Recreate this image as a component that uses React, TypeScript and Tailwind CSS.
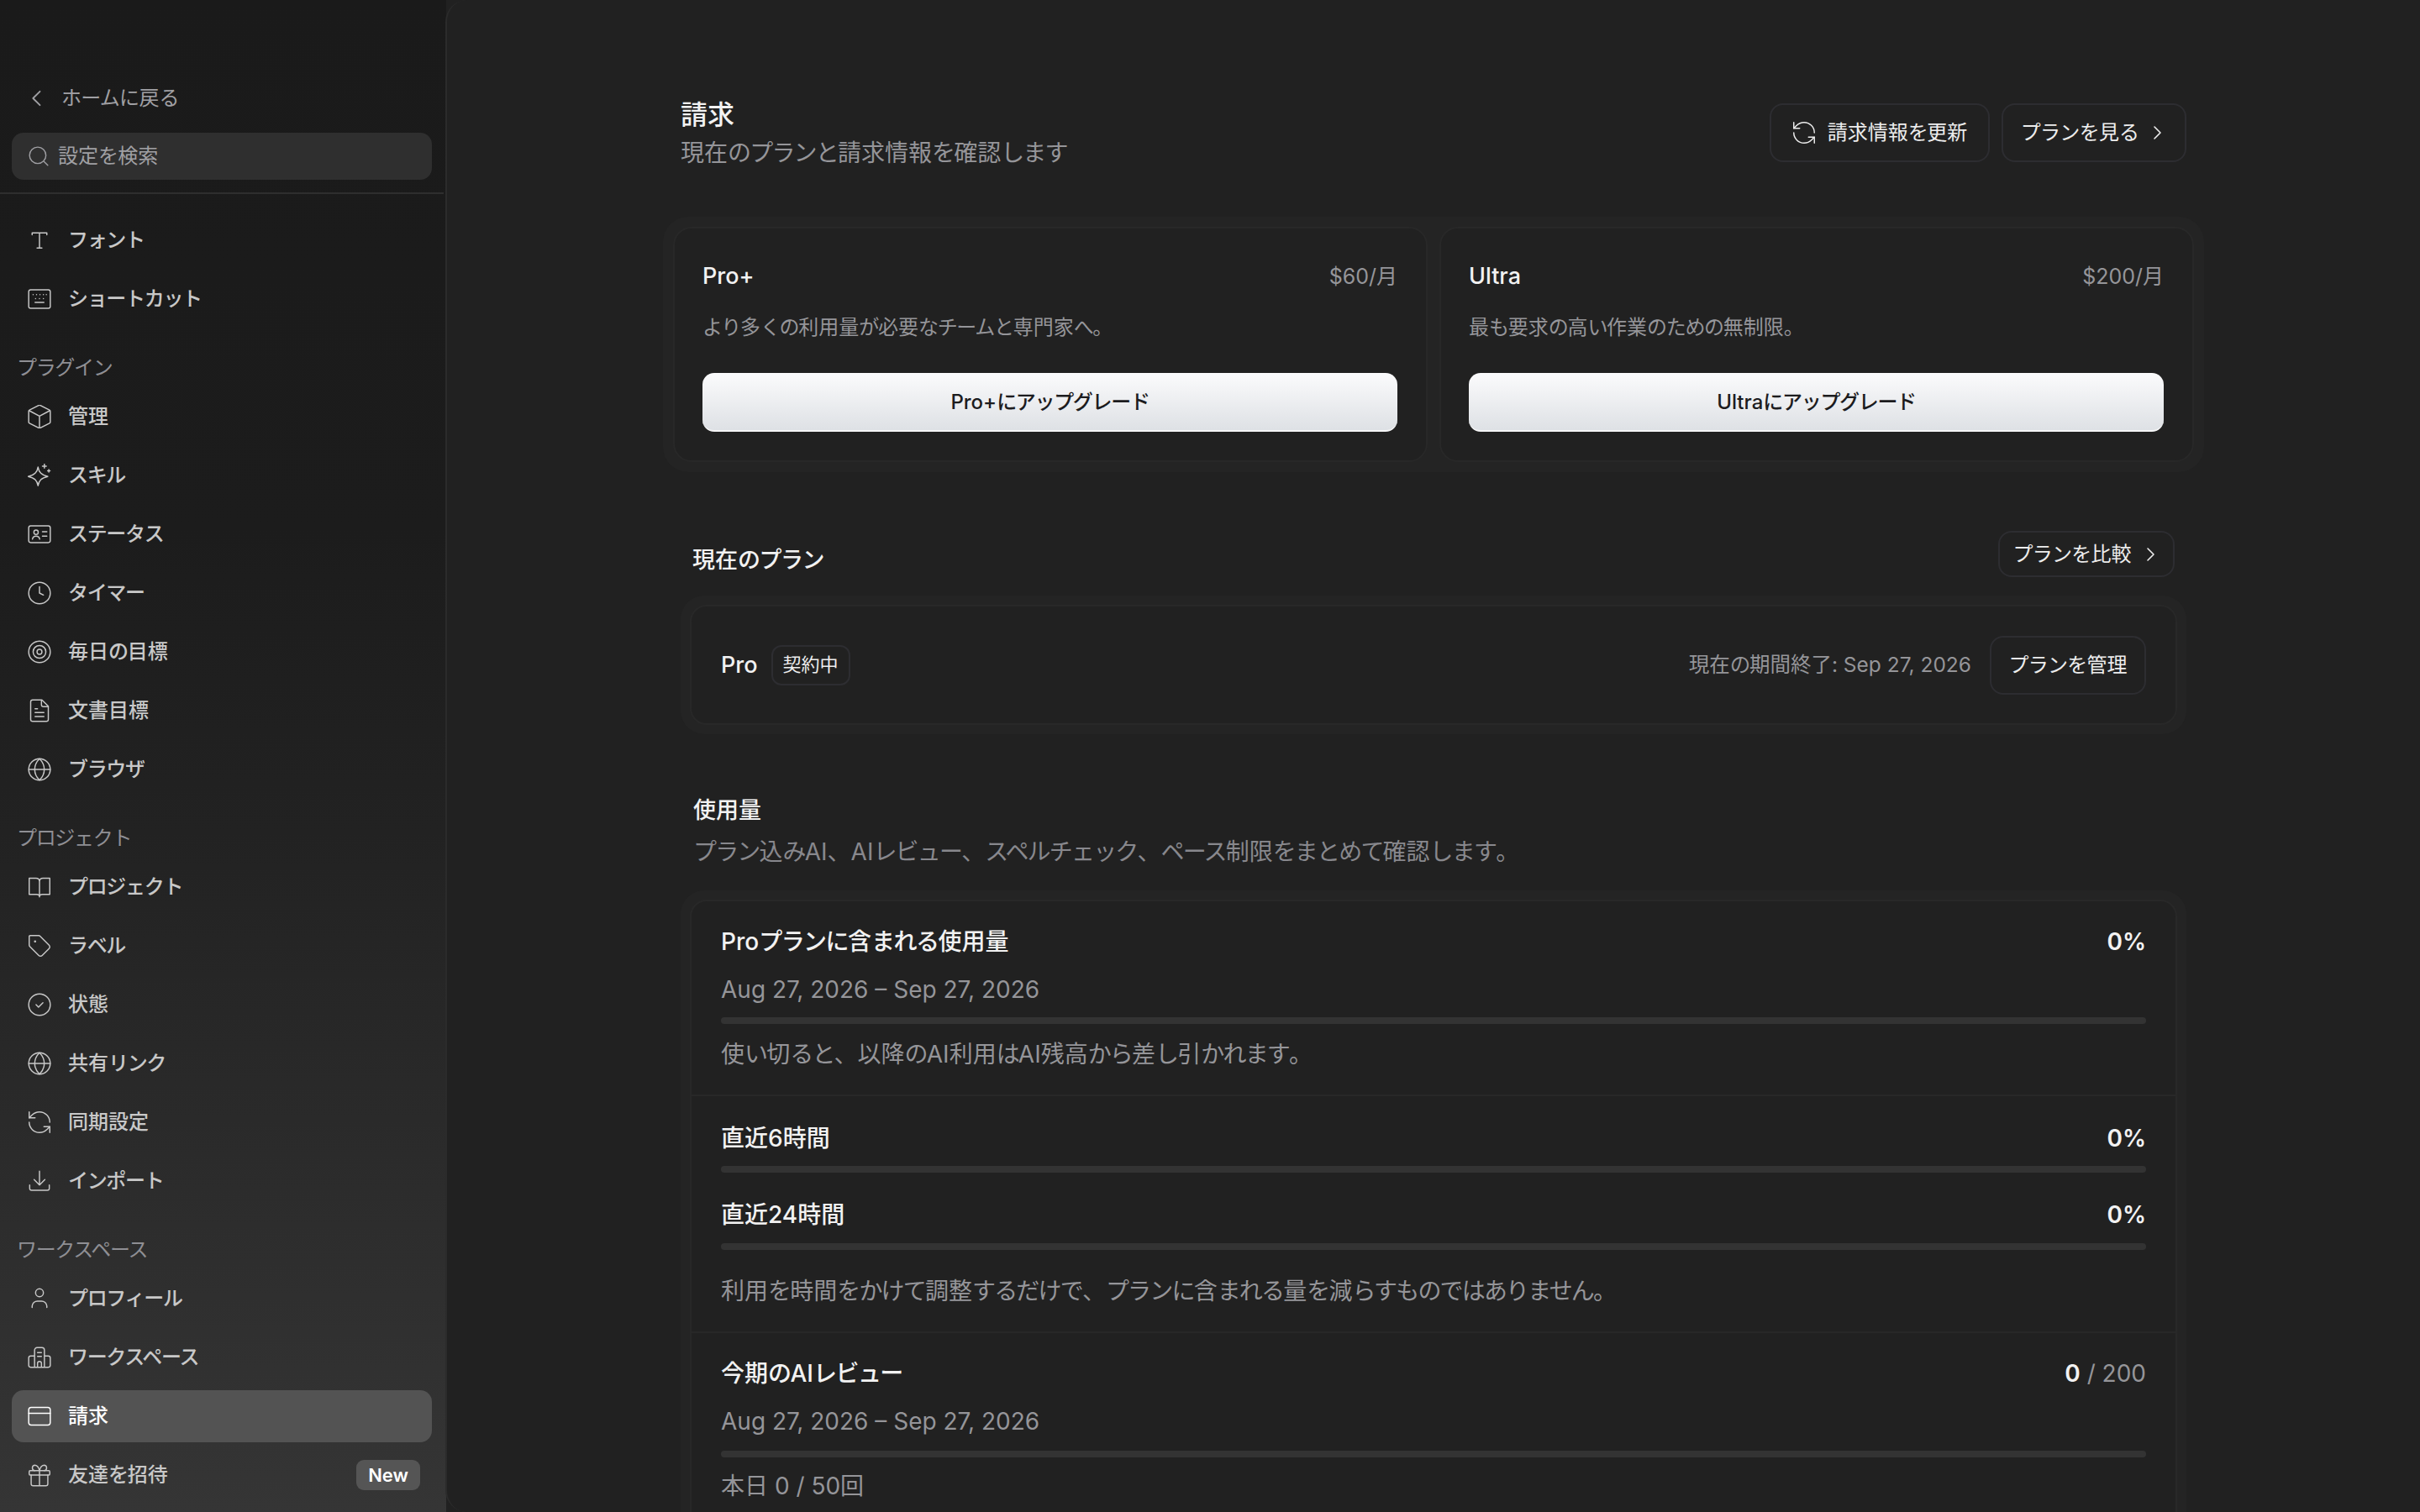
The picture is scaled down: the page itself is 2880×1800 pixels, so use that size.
import type { ReactNode } from 'react';

const icons: Record<string, ReactNode> = {
  type: <path d="M4.500 6.500v-2h15v2M12 4.500V20M9.500 20h5" />,
  keyboard: (
    <>
      <rect x="1" y="2.500" width="22" height="19" rx="2" />
      <path d="M5.500 7.500h.01M9 7.500h.01M12.500 7.500h.01M16 7.500h.01M19 7.500h.01M8 11.500h.01M12 11.500h.01M16 11.500h.01M7.500 15.500h9" />
    </>
  ),
  box: (
    <>
      <path d="M23 17.500V6.500a1.500 1.500 0 0 0-.8-1.300L12.800.5a1.600 1.600 0 0 0-1.600 0L1.800 5.200a1.500 1.500 0 0 0-.8 1.300v11a1.500 1.500 0 0 0 .8 1.300l9.400 4.700a1.600 1.600 0 0 0 1.600 0l9.400-4.700a1.500 1.500 0 0 0 .8-1.300z" />
      <path d="M1.300 5.800 12 11.500l10.700-5.700M12 11.500v12" />
    </>
  ),
  sparkle: (
    <>
      <path d="M10.500 3.500c.9 5.300 3.400 8 10 9.500-6.600 1.500-9.100 4.200-10 9.500-.9-5.300-3.400-8-10-9.500 6.600-1.500 9.100-4.200 10-9.500z" />
      <path d="M17 .5v4M15 2.500h4M21.500 6v2.500M20.300 7.200h2.500" />
    </>
  ),
  idcard: (
    <>
      <rect x="1" y="3.500" width="22" height="17" rx="2" />
      <circle cx="8.500" cy="10" r="2.200" />
      <path d="M4.800 17c.4-2 1.900-3 3.700-3s3.300 1 3.700 3M15 9.500h4.500M15 14h4.500" />
    </>
  ),
  clock: (
    <>
      <circle cx="12" cy="12" r="11" />
      <path d="M12 5.500V12l4 2" />
    </>
  ),
  target: (
    <>
      <circle cx="12" cy="12" r="11" />
      <circle cx="12" cy="12" r="6.500" />
      <circle cx="12" cy="12" r="2.500" />
    </>
  ),
  file: (
    <>
      <path d="M14.500 1H5a2 2 0 0 0-2 2v18a2 2 0 0 0 2 2h14a2 2 0 0 0 2-2V7.500z" />
      <path d="M14 1.500V6a2 2 0 0 0 2 2h4.500M7.500 10h2.500M7.500 14h9M7.500 18h9" />
    </>
  ),
  globe: (
    <>
      <circle cx="12" cy="12" r="11" />
      <path d="M1 12h22M12 1c-6.500 6.500-6.500 15.500 0 22 6.500-6.500 6.500-15.500 0-22z" />
    </>
  ),
  book: <path d="M12 6.500C12 4 10.500 3 8.500 3h-7v16.500H9c1.500 0 3 .6 3 2.500 0-1.900 1.500-2.500 3-2.500h7.500V3h-7C13.500 3 12 4 12 6.500zM12 6.500V22" />,
  tag: (
    <>
      <path d="M12.600 2.100A2 2 0 0 0 11.200 1.500H2.500a1 1 0 0 0-1 1v8.700a2 2 0 0 0 .6 1.400l9.200 9.200a2.400 2.400 0 0 0 3.400 0l7.100-7.100a2.400 2.400 0 0 0 0-3.400z" />
      <circle cx="7.500" cy="7.500" r=".5" fill="currentColor" />
    </>
  ),
  check: (
    <>
      <circle cx="12" cy="12" r="11" />
      <path d="m8.500 12 2.500 2.500 4.500-4.500" />
    </>
  ),
  sync: (
    <>
      <path d="M22.500 12A10.500 10.500 0 0 0 12 1.500a11 11 0 0 0-7.700 3.200L1.500 7.500" />
      <path d="M1.500 1.500v6h6" />
      <path d="M1.500 12A10.500 10.500 0 0 0 12 22.500a11 11 0 0 0 7.700-3.200l2.800-2.800" />
      <path d="M16.500 16.500h6v6" />
    </>
  ),
  download: <path d="M12 2v14M6.500 10.500 12 16l5.500-5.500M2 16v3.500a2 2 0 0 0 2 2h16a2 2 0 0 0 2-2V16" />,
  user: (
    <>
      <circle cx="12" cy="6" r="4" />
      <path d="M4.500 21v-1.500a5.500 5.500 0 0 1 5.500-5h4a5.500 5.500 0 0 1 5.500 5V21" />
    </>
  ),
  building: (
    <path d="M7 22V4.500A2.500 2.500 0 0 1 9.500 2h5A2.500 2.500 0 0 1 17 4.500V22M7 10.500H3a2 2 0 0 0-2 2V20a2 2 0 0 0 2 2h18a2 2 0 0 0 2-2v-7.500a2 2 0 0 0-2-2h-4M10 7h4M10 11h4M10 22v-4a2 2 0 0 1 4 0v4" />
  ),
  card: (
    <>
      <rect x="1" y="3" width="22" height="18" rx="2.500" />
      <path d="M1 9h22" />
    </>
  ),
  gift: (
    <>
      <rect x="1.500" y="7.500" width="21" height="4.500" rx="1" />
      <path d="M12 7.500V23M3.500 12v9a2 2 0 0 0 2 2h13a2 2 0 0 0 2-2v-9M7 7.500a2.800 2.800 0 0 1 0-5.500c2.800 0 4.300 2.500 5 5.500.7-3 2.200-5.500 5-5.500a2.800 2.800 0 0 1 0 5.500" />
    </>
  ),
};

function Icon({ name, className }: { name: string; className?: string }) {
  return (
    <svg viewBox="0 0 24 24" fill="none" stroke="currentColor" strokeWidth={1.25} strokeLinecap="round" strokeLinejoin="round" className={className ?? 'w-[28px] h-[28px] shrink-0'}>
      {icons[name]}
    </svg>
  );
}

function Chevron({ className }: { className: string }) {
  return (
    <svg viewBox="0 0 24 24" fill="none" stroke="currentColor" strokeWidth={1.6} strokeLinecap="round" strokeLinejoin="round" className={className}>
      <path d="m9 5 7 7-7 7" />
    </svg>
  );
}

// kana in the source font runs a little narrower than the kanji
function T({ children, k = 'tracking-[-0.055em]' }: { children: string; k?: string }) {
  const parts = children.split(/([\u3041-\u3096\u30a1-\u30fc]+)/);
  return (
    <>
      {parts.map((p, i) => (i % 2 ? <span key={i} className={k}>{p}</span> : p))}
    </>
  );
}

const wide = 'tracking-[-0.03em]';
const tight = 'tracking-[-0.065em]';

function NavItem({ icon, label, active, badge }: { icon: string; label: string; active?: boolean; badge?: string }) {
  return (
    <div className={`flex items-center h-[62px] mx-[14px] pl-[19px] pr-[14px] gap-[20px] rounded-[14px] text-[24px] font-medium ${active ? 'bg-[#535353] text-white' : 'text-[#c8c8c8]'}`}>
      <Icon name={icon} />
      <span className="flex-1"><T>{label}</T></span>
      {badge && <span className="h-[36px] px-[14px] flex items-center rounded-[9px] bg-[#555555] text-white text-[22px] font-semibold">{badge}</span>}
    </div>
  );
}

function NavSection({ title, children }: { title: string; children: ReactNode }) {
  return (
    <div className="mt-[36px]">
      <div className="h-[30px] mb-[12px] pl-[20px] flex items-center text-[24px] text-[#8f8f94]"><T>{title}</T></div>
      <div className="flex flex-col gap-[8px]">{children}</div>
    </div>
  );
}

function Sidebar() {
  return (
    <aside className="w-[531px] shrink-0 pr-[3px] pt-[96px] bg-[linear-gradient(180deg,#1a1a1a_0%,#1c1c1c_35%,#222222_55%,#353535_100%)]">
      <div className="h-[42px] flex items-center pl-[30px] gap-[15px] text-[24px] text-[#a0a0a4]">
        <Chevron className="w-[28px] h-[28px] rotate-180" />
        <span><T k={wide}>ホームに戻る</T></span>
      </div>
      <div className="mt-[20px] mx-[14px] h-[56px] rounded-[14px] bg-[#2f2f2f] flex items-center pl-[19px] gap-[10px] text-[24px] text-[#a0a0a4]">
        <svg viewBox="0 0 24 24" fill="none" stroke="currentColor" strokeWidth={1.3} strokeLinecap="round" className="w-[26px] h-[26px]">
          <circle cx="11" cy="11" r="9" />
          <path d="m18 18 4 4" />
        </svg>
        <span><T k={wide}>設定を検索</T></span>
      </div>
      <div className="mt-[15px] h-[2px] bg-[#2e2e2e]" />
      <div className="mt-[24px] flex flex-col gap-[8px]">
        <NavItem icon="type" label="フォント" />
        <NavItem icon="keyboard" label="ショートカット" />
      </div>
      <NavSection title="プラグイン">
        <NavItem icon="box" label="管理" />
        <NavItem icon="sparkle" label="スキル" />
        <NavItem icon="idcard" label="ステータス" />
        <NavItem icon="clock" label="タイマー" />
        <NavItem icon="target" label="毎日の目標" />
        <NavItem icon="file" label="文書目標" />
        <NavItem icon="globe" label="ブラウザ" />
      </NavSection>
      <NavSection title="プロジェクト">
        <NavItem icon="book" label="プロジェクト" />
        <NavItem icon="tag" label="ラベル" />
        <NavItem icon="check" label="状態" />
        <NavItem icon="globe" label="共有リンク" />
        <NavItem icon="sync" label="同期設定" />
        <NavItem icon="download" label="インポート" />
      </NavSection>
      <NavSection title="ワークスペース">
        <NavItem icon="user" label="プロフィール" />
        <NavItem icon="building" label="ワークスペース" />
        <NavItem icon="card" label="請求" active />
        <NavItem icon="gift" label="友達を招待" badge="New" />
      </NavSection>
    </aside>
  );
}

function PlanCard({ name, price, desc, cta }: { name: string; price: string; desc: string; cta: string }) {
  return (
    <div className="rounded-[22px] border-2 border-[#282828] bg-[#212121] pl-[33px] pr-[34px] pt-[36px] h-[280px]">
      <div className="flex justify-between items-center h-[40px]">
        <span className="pt-[2px] text-[27px] font-medium text-[#f2f2f2]">{name}</span>
        <span className="pt-[4px] text-[25px] text-[#959599]">{price}</span>
      </div>
      <div className="mt-[24px] h-[36px] flex items-center text-[24px] text-[#959599]"><span><T>{desc}</T></span></div>
      <button className="mt-[36px] pt-[2px] w-full h-[70px] rounded-[14px] bg-[linear-gradient(180deg,#fbfbfc_0%,#dee1e5_100%)] border-b-2 border-[#f6f6f7] text-[24px] font-medium text-[#1c1c1e]">
        <T>{cta}</T>
      </button>
    </div>
  );
}

function Bar({ className }: { className: string }) {
  return <div className={`h-[8px] rounded-full bg-[#333333] ${className}`} />;
}

function UsageHead({ title, value, rest }: { title: string; value: string; rest?: string }) {
  return (
    <div className="flex justify-between items-center h-[40px] pt-[3px] text-[28px] font-medium text-[#f2f2f2]">
      <span><T>{title}</T></span>
      <span className="font-semibold">
        {value}
        {rest && <span className="font-normal text-[#959599]">{rest}</span>}
      </span>
    </div>
  );
}

function Muted({ children, className }: { children: string; className: string }) {
  return <div className={`h-[40px] pt-[3px] flex items-center text-[28px] text-[#959599] ${className}`}><span><T k={tight}>{children}</T></span></div>;
}

const outlineBtn = 'flex items-center justify-center rounded-[16px] border-2 border-[#2d2d31] text-[24px] text-[#ededed]';

export default function App() {
  return (
    <div className="h-screen w-full flex overflow-hidden bg-[#212121] font-[Inter,'Noto_Sans_CJK_JP',sans-serif]">
      <Sidebar />
      <main className="flex-1 -ml-px relative bg-[#212121] rounded-l-[26px] border-l-2 border-[#2b2b2b] overflow-hidden flex justify-center">
        <div className="w-[1834px] shrink-0 pt-[117px]">
          <header className="flex justify-between items-start px-[21px]">
            <div>
              <h1 className="h-[40px] flex items-center text-[32px] font-medium text-[#f2f2f2]">請求</h1>
              <p className="mt-[3px] h-[44px] flex items-center text-[28px] text-[#959599]"><span><T k={tight}>現在のプランと請求情報を確認します</T></span></p>
            </div>
            <div className="mt-[6px] flex gap-[14px]">
              <button className={`${outlineBtn} w-[262px] h-[70px] gap-[14px]`}>
                <Icon name="sync" className="w-[28px] h-[28px]" />
                <span><T>請求情報を更新</T></span>
              </button>
              <button className={`${outlineBtn} w-[220px] h-[70px] gap-[10px]`}>
                <span><T k={wide}>プランを見る</T></span>
                <Chevron className="w-[24px] h-[24px]" />
              </button>
            </div>
          </header>

          <section className="mt-[54px] rounded-[30px] bg-[#242424] p-[12px] grid grid-cols-2 gap-[14px]">
            <PlanCard name="Pro+" price="$60/月" desc="より多くの利用量が必要なチームと専門家へ。" cta="Pro+にアップグレード" />
            <PlanCard name="Ultra" price="$200/月" desc="最も要求の高い作業のための無制限。" cta="Ultraにアップグレード" />
          </section>

          <div className="px-[21px]">
            <div className="mt-[70px] flex justify-between items-start px-[14px]">
              <h2 className="mt-[15px] h-[40px] flex items-center text-[27px] font-medium text-[#f2f2f2]"><span><T>現在のプラン</T></span></h2>
              <button className={`${outlineBtn} w-[210px] h-[55px] gap-[10px]`}>
                <span><T k={wide}>プランを比較</T></span>
                <Chevron className="w-[24px] h-[24px]" />
              </button>
            </div>

            <section className="mt-[22px] rounded-[28px] bg-[#242424] p-[11px]">
              <div className="h-[143px] rounded-[20px] border-2 border-[#282828] bg-[#212121] flex items-center justify-between px-[35px]">
                <div className="flex items-center gap-[16px]">
                  <span className="pt-[2px] text-[27px] font-medium text-[#f2f2f2]">Pro</span>
                  <span className={`${outlineBtn} !text-[22px] !rounded-[12px] w-[94px] h-[48px]`}>契約中</span>
                </div>
                <div className="flex items-center gap-[22px]">
                  <span className="text-[24.5px] text-[#959599]"><T>現在の期間終了: Sep 27, 2026</T></span>
                  <button className={`${outlineBtn} w-[186px] h-[70px]`}><span><T k={wide}>プランを管理</T></span></button>
                </div>
              </div>
            </section>

            <h2 className="mt-[71px] px-[15px] h-[40px] flex items-center text-[27px] font-medium text-[#f2f2f2]">使用量</h2>
            <p className="mt-[7px] px-[15px] h-[44px] flex items-center text-[28px] text-[#88888d]">
              <span><T k={tight}>プラン込みAI、AIレビュー、スペルチェック、ペース制限をまとめて確認します。</T></span>
            </p>

            <section className="mt-[24px] rounded-t-[28px] bg-[#242424] px-[11px] pt-[11px] pb-[40px]">
              <div className="rounded-t-[20px] border-2 border-[#282828] bg-[#212121]">
                <div className="px-[35px] pt-[26px] pb-[30px] border-b-2 border-[#282828]">
                  <UsageHead title="Proプランに含まれる使用量" value="0%" />
                  <Muted className="mt-[17px]">Aug 27, 2026 – Sep 27, 2026</Muted>
                  <Bar className="mt-[15px]" />
                  <Muted className="mt-[14px]">使い切ると、以降のAI利用はAI残高から差し引かれます。</Muted>
                </div>
                <div className="px-[35px] pt-[28px] pb-[30px] border-b-2 border-[#282828]">
                  <UsageHead title="直近6時間" value="0%" />
                  <Bar className="mt-[15px]" />
                  <div className="mt-[28px]">
                    <UsageHead title="直近24時間" value="0%" />
                  </div>
                  <Bar className="mt-[16px]" />
                  <Muted className="mt-[27px]">利用を時間をかけて調整するだけで、プランに含まれる量を減らすものではありません。</Muted>
                </div>
                <div className="px-[35px] pt-[26px] pb-[30px]">
                  <UsageHead title="今期のAIレビュー" value="0" rest=" / 200" />
                  <Muted className="mt-[17px]">Aug 27, 2026 – Sep 27, 2026</Muted>
                  <Bar className="mt-[17px]" />
                  <Muted className="mt-[12px]">本日 0 / 50回</Muted>
                </div>
              </div>
            </section>
          </div>
        </div>
      </main>
    </div>
  );
}
